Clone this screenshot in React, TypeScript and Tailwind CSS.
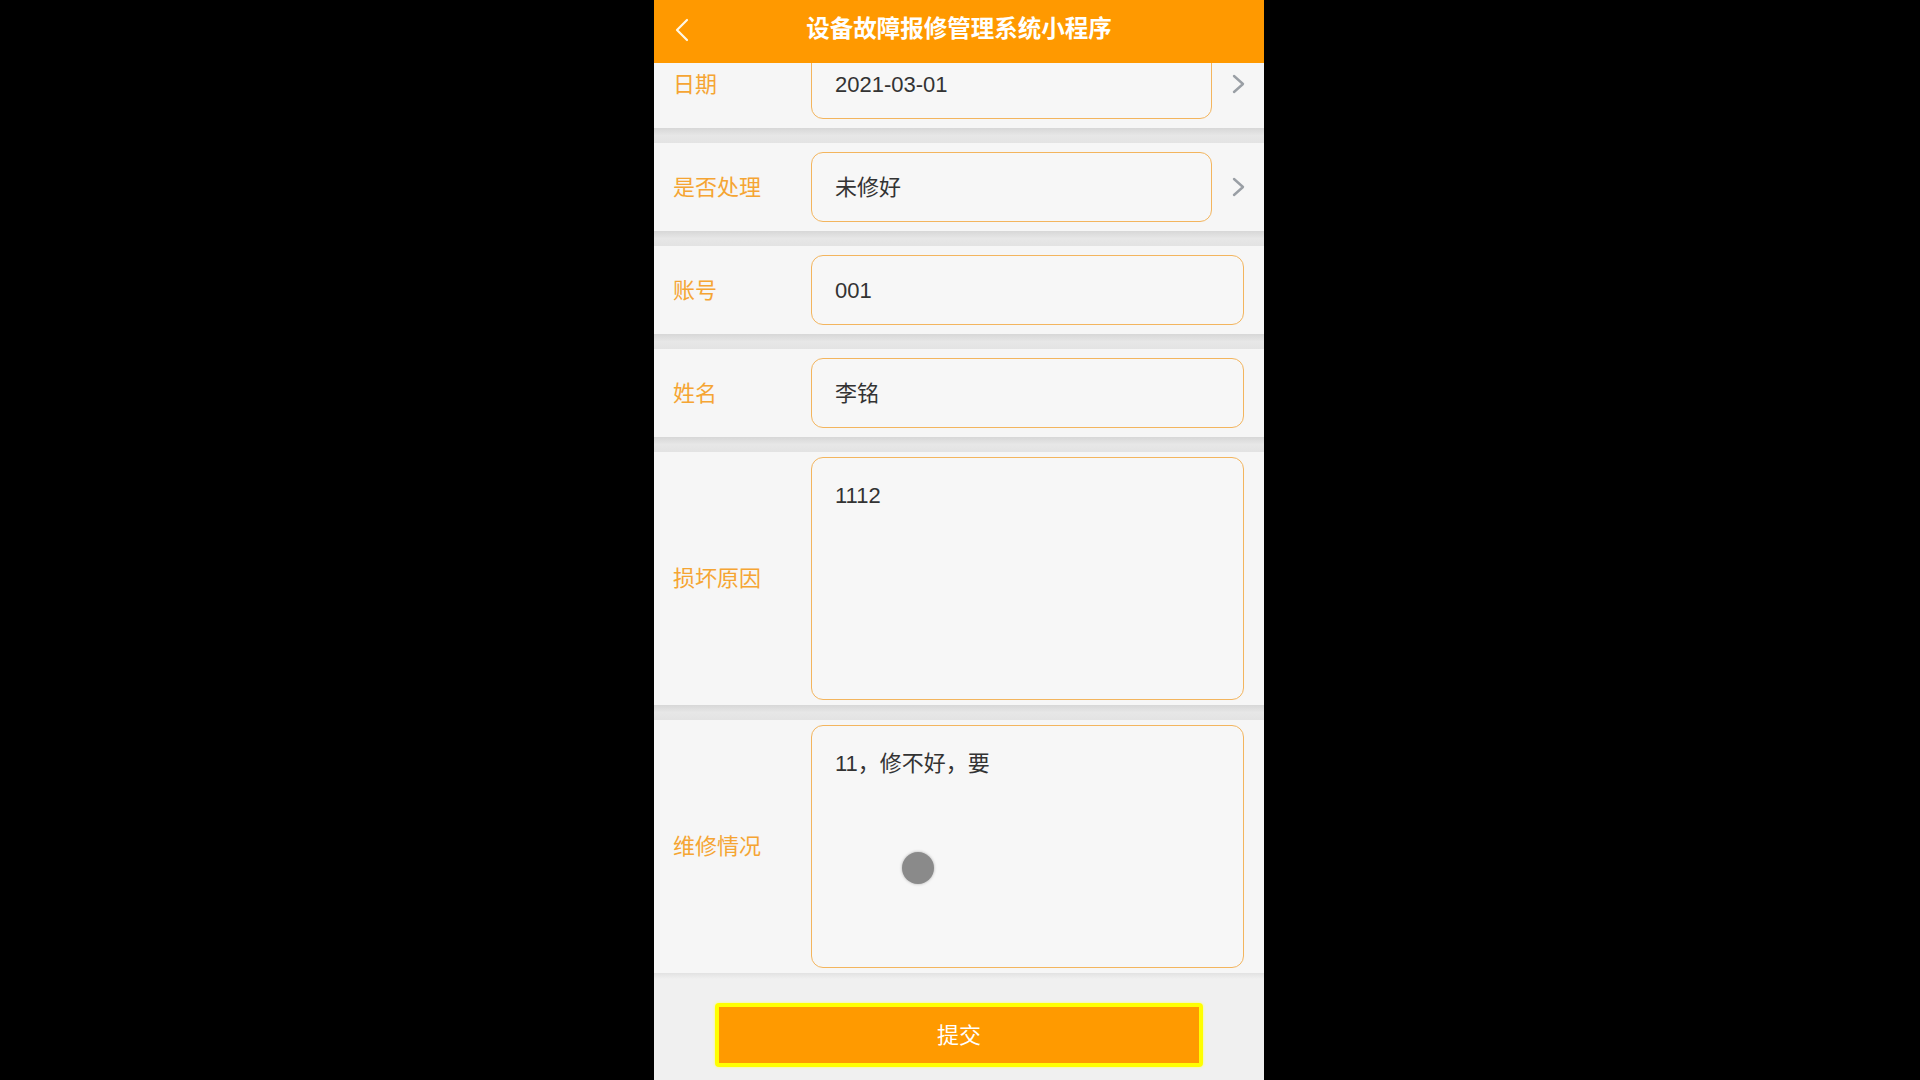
import React from "react";

type Field = {
  label: string;
  value: string;
  multiline?: boolean;
  picker?: boolean;
};

const fields: Field[] = [
  { label: "日期", value: "2021-03-01", picker: true },
  { label: "是否处理", value: "未修好", picker: true },
  { label: "账号", value: "001" },
  { label: "姓名", value: "李铭" },
  { label: "损坏原因", value: "1112", multiline: true },
  { label: "维修情况", value: "11，修不好，要", multiline: true },
];

const Chevron: React.FC<{ className?: string; color: string }> = ({ className, color }) => (
  <svg className={className} viewBox="0 0 14 24" fill="none" stroke={color} strokeWidth="2.2" strokeLinecap="round" strokeLinejoin="round">
    <polyline points="12,2 2,12 12,22" />
  </svg>
);

const Separator = () => (
  <div className="h-[15px] bg-linear-to-b from-[#d7d7d7] via-[#e7e7e7] to-[#e3e3e3]" />
);

const FormRow: React.FC<{ field: Field }> = ({ field }) => (
  <div className={`flex items-center bg-[#f6f6f6] ${field.multiline ? "py-[5px]" : "py-[9px]"}`}>
    <div className="w-[157px] shrink-0 pl-[19px] text-[22px] text-[#f5a533]">{field.label}</div>
    {/* 输入框 */}
    <div
      className={`flex-1 flex bg-[#f7f7f7] border-[1.5px] border-[#f3b55e] rounded-[12px] pl-[23px] text-[22px] text-[#333] ${
        field.multiline ? "h-[243px] items-start pt-[21px]" : "h-[70px] items-center"
      }`}
    >
      {field.value}
    </div>
    {field.picker ? (
      <div className="w-[52px] flex justify-center">
        <svg className="w-[13px] h-[20px]" viewBox="0 0 13 20" fill="none" stroke="#9a9fa5" strokeWidth="2.4" strokeLinecap="round" strokeLinejoin="round">
          <polyline points="2,2 11,10 2,18" />
        </svg>
      </div>
    ) : (
      <div className="w-[20px]" />
    )}
  </div>
);

export default function App() {
  return (
    <div className="w-full h-screen bg-black flex justify-center pr-[2px] font-['Liberation_Sans','Noto_Sans_CJK_SC',sans-serif]">
      <div className="w-[610px] h-[1080px] flex flex-col bg-[#f0f0f0]">
        {/* 顶部导航栏 */}
        <div className="h-[63px] shrink-0 bg-[#ff9900] flex items-center relative z-10 pb-[4px]">
          <div className="w-[56px] flex justify-center">
            <Chevron className="w-[14px] h-[24px]" color="#fff8e6" />
          </div>
          <div className="flex-1 text-center text-white font-bold text-[23.5px] pr-[56px]">设备故障报修管理系统小程序</div>
        </div>

        <div className="flex-1 overflow-hidden relative">
          <div className="-mt-[23px] flex flex-col">
            {fields.map((f, i) => (
              <React.Fragment key={f.label}>
                {i > 0 && <Separator />}
                <FormRow field={f} />
              </React.Fragment>
            ))}
            <div className="h-[6px] bg-linear-to-b from-[#e2e2e2] to-[#f0f0f0]" />
            <div className="flex justify-center mt-[24px]">
              <button className="w-[488px] h-[64px] bg-[#ff9a00] border-4 border-[#ffff00] rounded-[4px] text-white text-[22px] shadow-[0_0_3px_#ffff66]">
                提交
              </button>
            </div>
          </div>
          {/* 触摸指示点 */}
          <div className="absolute left-[248px] top-[789px] w-[32px] h-[32px] rounded-full bg-[#8a8a8a] shadow-[0_0_3px_#aaa]" />
        </div>
      </div>
    </div>
  );
}
